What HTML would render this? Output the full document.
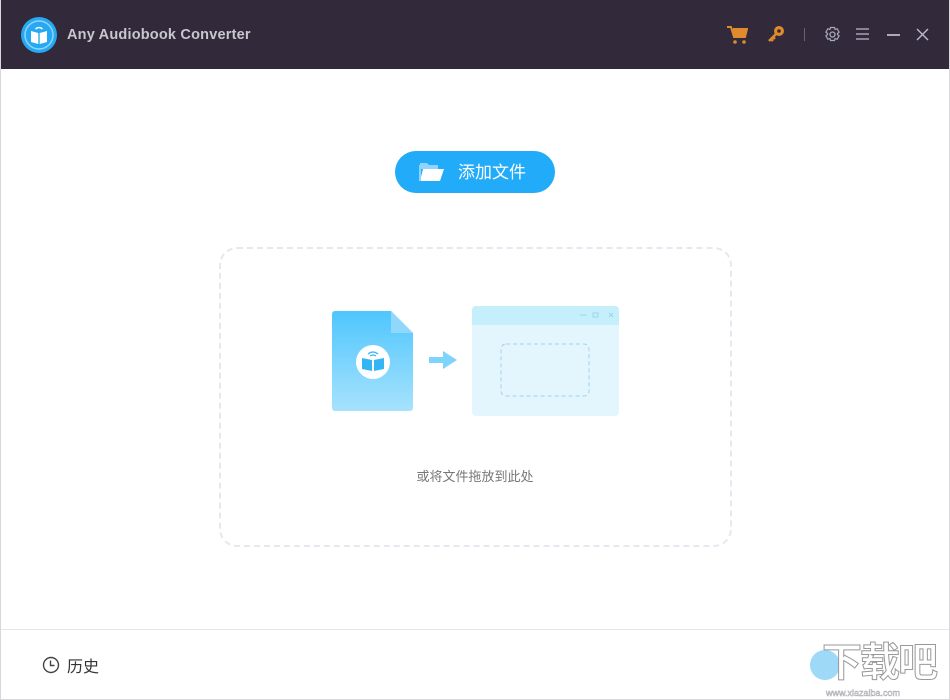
<!DOCTYPE html>
<html><head><meta charset="utf-8"><style>
*{margin:0;padding:0;box-sizing:border-box}
html,body{width:950px;height:700px;overflow:hidden}
body{background:#fff;font-family:"Liberation Sans","Noto Sans CJK SC",sans-serif;position:relative}
.frame{position:absolute;inset:0;border:1px solid #d8d8dc;border-top:none}
.top{position:absolute;left:0;top:0;width:950px;height:69px;background:#322a3b}
.title{position:absolute;left:67px;top:27px;color:#c9c6cc;font-size:14.5px;font-weight:bold;letter-spacing:.2px}
.btn{position:absolute;left:395px;top:151px;width:160px;height:42px;border-radius:21px;background:#22abf9;color:#fff;font-size:17px}
.btn span{position:absolute;left:63px;top:7px}
.drop{position:absolute;left:219px;top:247px;width:513px;height:300px;border:2px dashed #e6e8f0;border-radius:18px}
.hint{position:absolute;left:0;width:950px;top:466px;text-align:center;font-size:13px;color:#777}
.foot{position:absolute;left:1px;right:1px;top:629px;height:1px;background:#e6e6ea}
.hist{position:absolute;left:67px;top:653px;font-size:16px;color:#333}
</style></head><body>
<div class="top"></div>
<svg style="position:absolute;left:21px;top:17px" width="36" height="36" viewBox="0 0 36 36">
<circle cx="18" cy="18" r="18" fill="#26a8f3"/><circle cx="18" cy="18" r="14" fill="none" stroke="#8fd6ff" stroke-width="1.5"/>
<path d="M10 14 L17.3 16 V27 L10 25Z M18.7 16 L26 14 V25 L18.7 27Z" fill="#fff"/>
<path d="M14.5 12 Q18 9 21.5 12" stroke="#fff" stroke-width="1.5" fill="none"/></svg>
<div class="title">Any Audiobook Converter</div>
<svg style="position:absolute;left:726px;top:25px" width="22" height="20" viewBox="0 0 22 20"><path d="M1 2h4l3 10h11l2-8H7" fill="#e08a2e" stroke="#e08a2e" stroke-width="2"/><circle cx="9" cy="17" r="1.8" fill="#e08a2e"/><circle cx="18" cy="17" r="1.8" fill="#e08a2e"/></svg>
<svg style="position:absolute;left:766px;top:24px" width="20" height="20" viewBox="0 0 20 20"><circle cx="13" cy="7" r="5" fill="#e08a2e"/><circle cx="13" cy="7" r="1.8" fill="#322a3b"/><path d="M10 10 L3 17 M5 15 l2 2 M7 13 l2 2" stroke="#e08a2e" stroke-width="2.5"/></svg>
<div style="position:absolute;left:804px;top:28px;width:1px;height:13px;background:#666"></div>
<svg style="position:absolute;left:824px;top:26px" width="17" height="17" viewBox="0 0 17 17"><circle cx="8.5" cy="8.5" r="2.5" fill="none" stroke="#aab" stroke-width="1.3"/><path d="M6.5 1.5h4l.6 2 2-.8 2 3.4-1.6 1.4v1l1.6 1.4-2 3.4-2-.8-.6 2h-4l-.6-2-2 .8-2-3.4 1.6-1.4v-1L1.9 6.1l2-3.4 2 .8z" fill="none" stroke="#aab" stroke-width="1.2"/></svg>
<svg style="position:absolute;left:856px;top:28px" width="14" height="12"><path d="M0 1h13M0 6h13M0 11h13" stroke="#bbc" stroke-width="1.3"/></svg>
<div style="position:absolute;left:887px;top:34px;width:13px;height:2px;background:#aab"></div>
<svg style="position:absolute;left:916px;top:28px" width="13" height="13"><path d="M1 1l11 11M12 1L1 12" stroke="#bbc" stroke-width="1.4"/></svg>
<div class="btn"><svg style="position:absolute;left:24px;top:11px" width="26" height="20" viewBox="0 0 26 20"><path d="M1 1h7l2 2h9v4H1z" fill="#8fd3ff"/><path d="M4 7h21l-4 12H1z" fill="#fff"/><path d="M1 3v16" stroke="#8fd3ff" stroke-width="2"/></svg><span>添加文件</span></div>
<div class="drop"></div>
<svg style="position:absolute;left:330px;top:306px" width="300" height="112" viewBox="330 306 300 112">
<defs><linearGradient id="g" x1="0" y1="0" x2="0" y2="1"><stop offset="0" stop-color="#4fc6fd"/><stop offset="1" stop-color="#a7e2fd"/></linearGradient></defs>
<path d="M335 311h56l22 22v75a3 3 0 0 1-3 3h-75a3 3 0 0 1-3-3v-94a3 3 0 0 1 3-3z" fill="url(#g)"/>
<path d="M391 311v22h22z" fill="#8fd8fb"/>
<circle cx="373" cy="362" r="17" fill="#fff"/>
<path d="M362 358l10 2v11l-10-2zM374 360l10-2v11l-10 2z" fill="#34b6f5"/>
<path d="M368 354q5-4 10 0M370 356q3-2 6 0" stroke="#34b6f5" stroke-width="1.3" fill="none"/>
<path d="M429 357h14v-6l14 9-14 9v-6h-14z" fill="#7fd4fb"/>
<rect x="472" y="306" width="147" height="110" rx="4" fill="#e3f5fd"/>
<path d="M476 306h139a4 4 0 0 1 4 4v15h-147v-15a4 4 0 0 1 4-4z" fill="#c6effc"/>
<path d="M580 315h7M609 313l4 4M613 313l-4 4" stroke="#9cd3ea" stroke-width="1"/><rect x="593" y="313" width="5" height="4" fill="none" stroke="#9cd3ea"/>
<rect x="501" y="344" width="88" height="52" rx="5" fill="none" stroke="#9fd3ee" stroke-dasharray="4 3"/>
</svg>
<div class="hint">或将文件拖放到此处</div>
<div class="foot"></div>
<svg style="position:absolute;left:42px;top:656px" width="18" height="18"><circle cx="9" cy="9" r="7.5" fill="none" stroke="#444" stroke-width="1.4"/><path d="M8.5 4.5v5h4" fill="none" stroke="#444" stroke-width="1.4"/></svg>
<div class="hist">历史</div>
<div style="position:absolute;left:810px;top:650px;width:30px;height:30px;border-radius:50%;background:#9ed9f8"></div>
<div style="position:absolute;left:822px;top:640px;font-size:40px;line-height:46px;white-space:nowrap;color:#fff;-webkit-text-stroke:1px #999;font-weight:bold;letter-spacing:-2px">下载吧</div>
<div style="position:absolute;left:826px;top:688px;font-size:9px;white-space:nowrap;color:#fff;-webkit-text-stroke:.5px #aaa">www.xiazaiba.com</div>
<div class="frame"></div>
</body></html>
